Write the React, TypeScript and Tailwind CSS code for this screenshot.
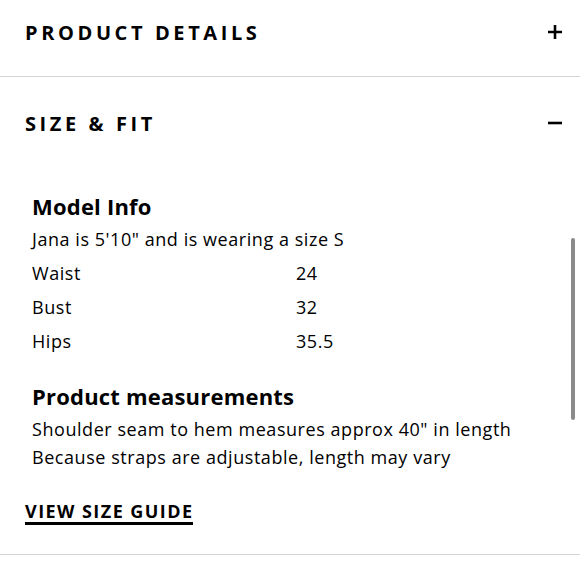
import { useState } from 'react';

const rows = [
    { label: 'Waist', value: '24' },
    { label: 'Bust', value: '32' },
    { label: 'Hips', value: '35.5' },
];

function PlusIcon() {
    return (
        <svg width="14" height="14" viewBox="0 0 14 14" className="block">
            <path d="M7 0v14M0 7h14" stroke="#000" strokeWidth="2.6" />
        </svg>
    );
}

function MinusIcon() {
    return (
        <svg width="14" height="14" viewBox="0 0 14 14" className="block">
            <path d="M0 7h14" stroke="#000" strokeWidth="2.6" />
        </svg>
    );
}

export default function App() {
    const [open, setOpen] = useState<'details' | 'size'>('size');

    return (
        <div className="relative w-[580px] h-[580px] overflow-hidden bg-white text-black font-['Open_Sans',sans-serif]">
            <button
                onClick={() => setOpen('details')}
                className="w-full h-[77px] flex items-start justify-between pl-[25px] pr-[18px] pt-[19px] border-b-[1.5px] border-[#d4d4d4]"
            >
                <span className="text-[20px] leading-[27px] font-bold tracking-[0.18em]">PRODUCT DETAILS</span>
                <span className="mt-[6px]"><PlusIcon /></span>
            </button>

            <div className="border-b-[1.5px] border-[#d4d4d4]">
                <button
                    onClick={() => setOpen('size')}
                    className="w-full flex items-start justify-between pl-[25px] pr-[18px] pt-[33px]"
                >
                    <span className="text-[20px] leading-[27px] font-bold tracking-[0.18em]">SIZE &amp; FIT</span>
                    <span className="mt-[6px]"><MinusIcon /></span>
                </button>

                {open === 'size' && (
                    <div className="pl-[32px] pt-[54px] pb-[29px]">
                        <h3 className="text-[22px] leading-[30px] font-bold tracking-[0.2px]">Model Info</h3>
                        <p className="text-[18px] leading-[34px] tracking-[0.55px] mt-[1px]">Jana is 5'10" and is wearing a size S</p>
                        {rows.map((r) => (
                            <div key={r.label} className="flex text-[18px] leading-[34px] tracking-[0.55px]">
                                <span className="w-[264px]">{r.label}</span>
                                <span>{r.value}</span>
                            </div>
                        ))}

                        <h3 className="text-[22px] leading-[30px] font-bold tracking-[0.2px] mt-[23px]">Product measurements</h3>
                        <p className="text-[18px] leading-[28px] tracking-[0.55px] mt-[4px]">Shoulder seam to hem measures approx 40" in length</p>
                        <p className="text-[18px] leading-[28px] tracking-[0.55px]">Because straps are adjustable, length may vary</p>

                        <a className="inline-block -ml-[7px] mt-[29px] text-[18px] leading-[22px] font-bold tracking-[0.08em] border-b-[3.5px] border-black">
                            VIEW SIZE GUIDE
                        </a>
                    </div>
                )}
            </div>

            <div className="absolute right-[5px] top-[238px] w-[4px] h-[182px] rounded-full bg-[#8a8a8a]" />
        </div>
    );
}
